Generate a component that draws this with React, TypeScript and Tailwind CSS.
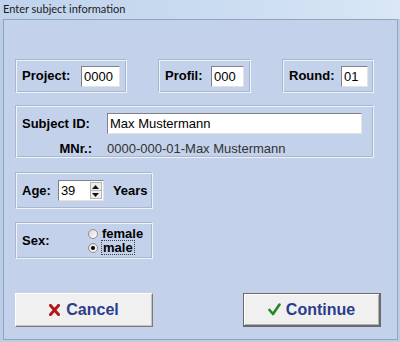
import React, { useState } from 'react';

// etched group frame, classic windows look
const groupBox =
  'border border-t-[#a9b7cc] border-l-[#a9b7cc] border-b-[#eef2f9] border-r-[#eef2f9] shadow-[inset_1px_1px_0_#eef2f9,inset_-1px_-1px_0_#a9b7cc]';

const sunken =
  'bg-white border border-t-[#7d8389] border-l-[#7d8389] border-b-[#e3e3e3] border-r-[#e3e3e3] text-[13px] text-black leading-none pl-[2px] flex items-center';

const Radio: React.FC<{ checked: boolean }> = ({ checked }) => (
  <span className="w-[10px] h-[10px] rounded-full border border-[#8e8f8f] bg-gradient-to-br from-[#d8d8d8] to-white flex items-center justify-center">
    {checked && <span className="w-[4px] h-[4px] rounded-full bg-black" />}
  </span>
);

const App: React.FC = () => {
  const [sex, setSex] = useState<'female' | 'male'>('male');

  return (
    <div className="w-[400px] h-[342px] overflow-hidden bg-[#b9cde6] font-['Liberation_Sans',Arial,sans-serif]">
      {/* Title bar */}
      <div className="h-[19px] flex items-center pl-[3px] bg-gradient-to-r from-[#bfd3ec] via-[#c9dbf0] to-[#d9e7f6] text-[11px] text-[#1b1b1b] font-['Lato',sans-serif]">
        Enter subject information
      </div>

      {/* Client area */}
      <div className="ml-[3px] w-[395px] h-[321px] border border-[#92a3bb] bg-[#c3d2ea] pl-[11px] pt-[39px]">
        {/* Project / Profil / Round */}
        <div className="flex gap-[31px]">
          <div className={`${groupBox} w-[112px] h-[34px] flex items-center justify-between px-[6px]`}>
            <span className="text-[13px] font-bold text-black">Project:</span>
            <div className={`${sunken} w-[39px] h-[21px]`}>0000</div>
          </div>
          <div className={`${groupBox} w-[93px] h-[34px] flex items-center justify-between px-[6px]`}>
            <span className="text-[13px] font-bold text-black">Profil:</span>
            <div className={`${sunken} w-[33px] h-[21px]`}>000</div>
          </div>
          <div className={`${groupBox} w-[92px] h-[34px] flex items-center justify-between pl-[6px] pr-[5px]`}>
            <span className="text-[13px] font-bold text-black">Round:</span>
            <div className={`${sunken} w-[27px] h-[21px]`}>01</div>
          </div>
        </div>

        {/* Subject */}
        <div className={`${groupBox} mt-[12px] w-[359px] h-[53px] pt-[7px] pl-[6px]`}>
          <div className="flex items-center">
            <span className="w-[85px] text-[13px] font-bold text-black">Subject ID:</span>
            <div className={`${sunken} w-[255px] h-[21px]`}>Max Mustermann</div>
          </div>
          <div className="flex items-center mt-[7px] h-[16px]">
            <span className="w-[85px] pr-[15px] text-right text-[13px] font-bold text-black">MNr.:</span>
            <span className="text-[13px] text-[#333]">0000-000-01-Max Mustermann</span>
          </div>
        </div>

        {/* Age */}
        <div className={`${groupBox} mt-[14px] w-[138px] h-[37px] flex items-center pl-[6px]`}>
          <span className="text-[13px] font-bold text-black">Age:</span>
          <div className={`${sunken} ml-[7px] w-[46px] h-[21px] justify-between pr-[1px]`}>
            <span>39</span>
            <div className="w-[12px] h-[17px] flex flex-col border border-[#b5b5b5] bg-[#ececec]">
              <div className="flex-1 flex items-center justify-center border-b border-[#b5b5b5]">
                <svg width="7" height="4" viewBox="0 0 7 4">
                  <path d="M3.5 0 L7 4 L0 4 Z" fill="#111" />
                </svg>
              </div>
              <div className="flex-1 flex items-center justify-center">
                <svg width="7" height="4" viewBox="0 0 7 4">
                  <path d="M0 0 L7 0 L3.5 4 Z" fill="#111" />
                </svg>
              </div>
            </div>
          </div>
          <span className="ml-[9px] text-[13px] font-bold text-black">Years</span>
        </div>

        {/* Sex */}
        <div className={`${groupBox} mt-[13px] w-[138px] h-[37px] flex items-center pl-[6px]`}>
          <span className="w-[66px] text-[13px] font-bold text-black">Sex:</span>
          <div className="flex flex-col">
            <button className="flex items-center gap-[4px] h-[14px]" onClick={() => setSex('female')}>
              <Radio checked={sex === 'female'} />
              <span className="text-[13px] font-bold text-black leading-none">female</span>
            </button>
            <button className="flex items-center gap-[4px] h-[14px]" onClick={() => setSex('male')}>
              <Radio checked={sex === 'male'} />
              <span className="text-[13px] font-bold text-black leading-none outline-1 outline-dotted outline-[#444] px-[1px]">male</span>
            </button>
          </div>
        </div>

        {/* Buttons */}
        <div className="mt-[34px] w-[366px] flex justify-between">
          <button className="w-[138px] h-[34px] flex items-center justify-center gap-[6px] bg-[#f0f0f0] border border-t-white border-l-white border-r-[#7a7a7a] border-b-[#7a7a7a] shadow-[inset_-1px_-1px_0_#c4c4c4]">
            <svg width="11" height="12" viewBox="0 0 11 12">
              <path d="M1.5 1.5 L9.5 10.5 M9.5 1.5 L1.5 10.5" stroke="#b3171b" strokeWidth="3" strokeLinecap="square" />
            </svg>
            <span className="text-[16px] font-bold text-[#2b3d8d]">Cancel</span>
          </button>
          <button className="w-[138px] h-[34px] flex items-center justify-center gap-[5px] bg-[#f0f0f0] border border-[#6a6a6a] border-r-2 border-b-2 shadow-[inset_1px_1px_0_white,inset_-1px_-1px_0_#b0b0b0]">
            <svg width="13" height="13" viewBox="0 0 13 13">
              <path d="M1.5 7 L5 11 L11.5 1.5" stroke="#1f8a22" strokeWidth="2.6" fill="none" strokeLinecap="round" strokeLinejoin="round" />
            </svg>
            <span className="text-[16px] font-bold text-[#2b3d8d]">Continue</span>
          </button>
        </div>
      </div>
    </div>
  );
};

export default App;
